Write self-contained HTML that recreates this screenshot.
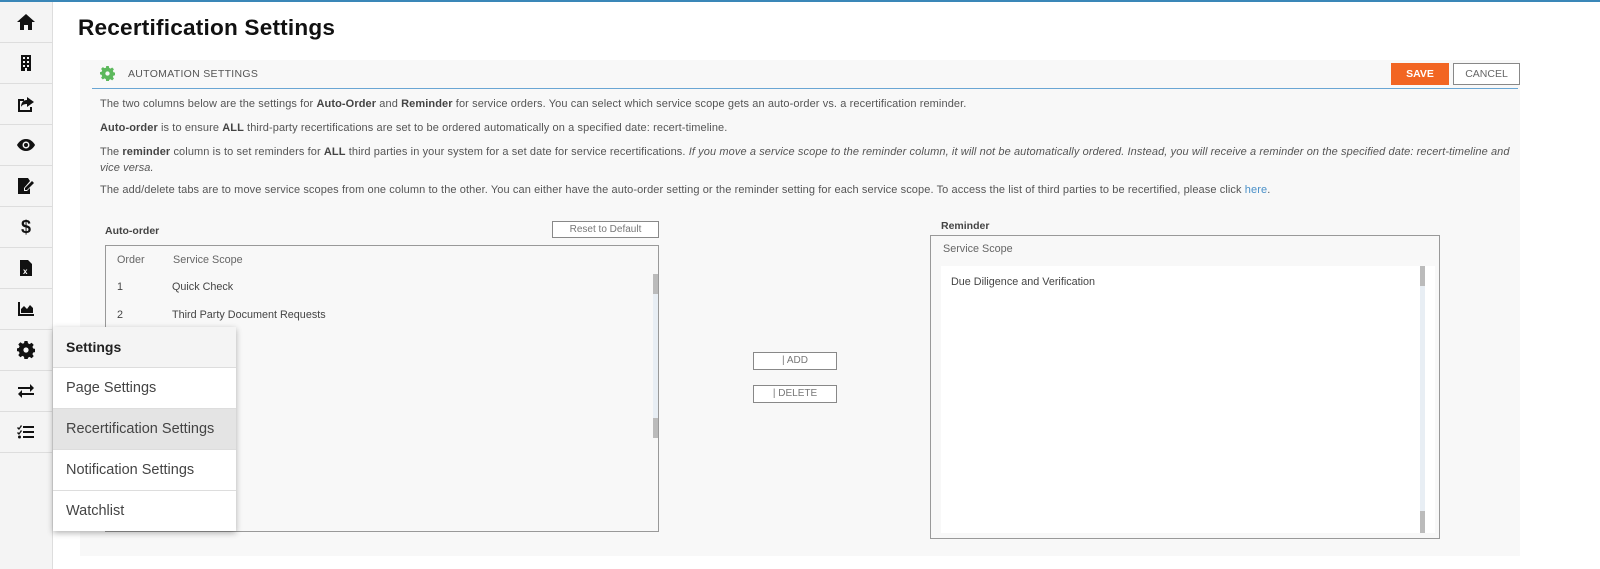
<!DOCTYPE html>
<html><head><style>
*{box-sizing:border-box;margin:0;padding:0}
body{width:1600px;height:569px;background:#fff;font-family:"Liberation Sans",sans-serif;position:relative;overflow:hidden;color:#555}
.topline{position:absolute;left:0;top:0;width:1600px;height:2px;background:#3a87b8}
.side{position:absolute;left:0;top:2px;width:53px;height:567px;background:#f4f4f4;border-right:1px solid #ddd}
.si{position:absolute;left:0;width:52px;height:41px;border-bottom:1px solid #ddd;display:flex;align-items:center;justify-content:center}
h1{position:absolute;left:78px;top:15px;font-size:22.6px;font-weight:bold;color:#111;letter-spacing:0.2px}
.panel{position:absolute;left:80px;top:60px;width:1440px;height:496px;background:#f8f8f8}
.hdr{position:absolute;left:12px;top:0;width:1426px;height:29px;border-bottom:1.5px solid #6aa6d4}
.hdr span{position:absolute;left:36px;top:8px;font-size:10.5px;color:#555;letter-spacing:.3px}
.save{position:absolute;left:1311px;top:3px;width:58px;height:22px;background:#f26522;color:#fff;font-weight:bold;font-size:10.5px;text-align:center;line-height:22px}
.cancel{position:absolute;left:1373px;top:3px;width:67px;height:22px;border:1px solid #888;background:#fff;color:#666;font-size:10.5px;text-align:center;line-height:20px}
.p{position:absolute;left:20px;font-size:11px;color:#555;white-space:nowrap;letter-spacing:.1px}
.p b{color:#444}
a{color:#4a90c8;text-decoration:none}
.lbl{position:absolute;font-size:10.5px;font-weight:bold;color:#444}
.box{position:absolute;border:1px solid #999;background:#f8f8f8}
.btn{position:absolute;border:1px solid #888;background:#fff;font-size:10px;color:#777;text-align:center}
.t{position:absolute;font-size:10.8px;color:#444}
.menu{position:absolute;left:53px;top:327px;width:183px;height:204px;background:#fff;box-shadow:0 2px 6px rgba(0,0,0,.3)}
.mi{height:41px;border-bottom:1px solid #ddd;padding-left:13px;line-height:40px;font-size:14.5px;color:#444}
</style></head><body>
<div class="topline"></div>
<div class="side">
<div class="si" style="top:0"><svg width="20" height="18" viewBox="0 0 20 18"><path d="M10 1L1 9h3v8h4v-5h4v5h4V9h3z" fill="#111"/></svg></div>
<div class="si" style="top:41px"><svg width="14" height="18" viewBox="0 0 14 18"><path d="M2 1h10v16H8v-3H6v3H2z" fill="#111"/><g fill="#f4f4f4"><rect x="4" y="3" width="2" height="2"/><rect x="8" y="3" width="2" height="2"/><rect x="4" y="7" width="2" height="2"/><rect x="8" y="7" width="2" height="2"/><rect x="4" y="11" width="2" height="2"/><rect x="8" y="11" width="2" height="2"/></g></svg></div>
<div class="si" style="top:82px"><svg width="20" height="18" viewBox="0 0 20 18"><path d="M2 4h6v2H4v9h10v-3h2v5H2z" fill="#111"/><path d="M11 2l7 5-7 5V9c-3 0-5 1-6 3 0-4 2-7 6-7z" fill="#111"/></svg></div>
<div class="si" style="top:123px"><svg width="20" height="14" viewBox="0 0 20 14"><path d="M10 1C5 1 2 5 1 7c1 2 4 6 9 6s8-4 9-6c-1-2-4-6-9-6z" fill="#111"/><circle cx="10" cy="7" r="3.5" fill="#f4f4f4"/><circle cx="10" cy="7" r="2" fill="#111"/></svg></div>
<div class="si" style="top:164px"><svg width="20" height="18" viewBox="0 0 20 18"><path d="M2 1h10l2 3-6 7v3h3l3-3v6H2z" fill="#111"/><path d="M16 4l2 2-7 7H9v-2z" fill="#111"/></svg></div>
<div class="si" style="top:205px;font-weight:bold;font-size:18px;color:#111">$</div>
<div class="si" style="top:246px"><svg width="14" height="18" viewBox="0 0 14 18"><path d="M1 1h8l4 4v12H1z" fill="#111"/><text x="4" y="15" font-size="8" fill="#fff" font-family="Liberation Sans" font-weight="bold">x</text></svg></div>
<div class="si" style="top:287px"><svg width="18" height="16" viewBox="0 0 18 16"><path d="M1 1h2v12h14v2H1z" fill="#111"/><path d="M4 12V8l3-3 3 3 3-4 3 3v5z" fill="#111"/></svg></div>
<div class="si" style="top:328px"><svg width="18" height="18" viewBox="0 0 18 18"><path d="M7.5 0h3l.5 2.3 1.6.8 2-1.3 2.1 2.1-1.3 2 .8 1.6 2.3.5v3l-2.3.5-.8 1.6 1.3 2-2.1 2.1-2-1.3-1.6.8-.5 2.3h-3L7 15.7l-1.6-.8-2 1.3-2.1-2.1 1.3-2-.8-1.6L-.5 10V7.5l2.3-.5.8-1.6-1.3-2 2.1-2.1 2 1.3L7 2.3z" fill="#111"/><circle cx="9" cy="9" r="2.6" fill="#f4f4f4"/></svg></div>
<div class="si" style="top:369px"><svg width="18" height="16" viewBox="0 0 18 16"><path d="M1 4h12V1l4 4-4 4V6H1z" fill="#111"/><path d="M17 10H5V7l-4 4 4 4v-3h12z" fill="#111"/></svg></div>
<div class="si" style="top:410px"><svg width="18" height="16" viewBox="0 0 18 16"><g fill="#111"><rect x="6" y="2" width="11" height="2"/><rect x="6" y="7" width="11" height="2"/><rect x="6" y="12" width="11" height="2"/><path d="M1 3l1 1 2-3 1 1-3 4-2-2z"/><path d="M1 8l1 1 2-3 1 1-3 4-2-2z"/><circle cx="2.5" cy="13" r="1.5"/></g></svg></div>
</div>
<h1>Recertification Settings</h1>
<div class="panel">
<div class="hdr"><svg style="position:absolute;left:8px;top:6px" width="15" height="15" viewBox="0 0 18 18"><path d="M7.5 0h3l.5 2.3 1.6.8 2-1.3 2.1 2.1-1.3 2 .8 1.6 2.3.5v3l-2.3.5-.8 1.6 1.3 2-2.1 2.1-2-1.3-1.6.8-.5 2.3h-3L7 15.7l-1.6-.8-2 1.3-2.1-2.1 1.3-2-.8-1.6L-.5 10V7.5l2.3-.5.8-1.6-1.3-2 2.1-2.1 2 1.3L7 2.3z" fill="#5cb85c"/><circle cx="9" cy="9" r="2.6" fill="#f8f8f8"/></svg><span>AUTOMATION SETTINGS</span></div>
<div class="save">SAVE</div><div class="cancel">CANCEL</div>
<div class="p" style="top:38px">The two columns below are the settings for <b>Auto-Order</b> and <b>Reminder</b> for service orders. You can select which service scope gets an auto-order vs. a recertification reminder.</div>
<div class="p" style="top:62px"><b>Auto-order</b> is to ensure <b>ALL</b> third-party recertifications are set to be ordered automatically on a specified date: recert-timeline.</div>
<div class="p" style="top:86px">The <b>reminder</b> column is to set reminders for <b>ALL</b> third parties in your system for a set date for service recertifications. <i>If you move a service scope to the reminder column, it will not be automatically ordered. Instead, you will receive a reminder on the specified date: recert-timeline and</i></div>
<div class="p" style="top:102px"><i>vice versa.</i></div>
<div class="p" style="top:124px">The add/delete tabs are to move service scopes from one column to the other. You can either have the auto-order setting or the reminder setting for each service scope. To access the list of third parties to be recertified, please click <a>here</a>.</div>
<div class="lbl" style="left:25px;top:165px">Auto-order</div>
<div class="btn" style="left:472px;top:161px;width:107px;height:17px;line-height:15px">Reset to Default</div>
<div class="box" style="left:25px;top:185px;width:554px;height:287px">
<div style="position:absolute;right:0;top:28px;width:5px;height:164px;background:#e8eef4"></div>
<div style="position:absolute;right:0;top:28px;width:5px;height:20px;background:#bbb"></div>
<div style="position:absolute;right:0;top:172px;width:5px;height:20px;background:#bbb"></div>
<div class="t" style="left:11px;top:8px;color:#666">Order</div><div class="t" style="left:67px;top:8px;color:#666">Service Scope</div>
<div class="t" style="left:11px;top:35px">1</div><div class="t" style="left:66px;top:35px">Quick Check</div>
<div class="t" style="left:11px;top:63px">2</div><div class="t" style="left:66px;top:63px">Third Party Document Requests</div>
<div class="t" style="left:66px;top:91px">Workflow</div>
</div>
<div class="btn" style="left:673px;top:292px;width:84px;height:18px;line-height:16px">| ADD</div>
<div class="btn" style="left:673px;top:325px;width:84px;height:18px;line-height:16px">| DELETE</div>
<div class="lbl" style="left:861px;top:160px">Reminder</div>
<div class="box" style="left:850px;top:175px;width:510px;height:304px">
<div class="t" style="left:12px;top:7px;color:#666">Service Scope</div>
<div style="position:absolute;left:10px;top:30px;width:494px;height:267px;background:#fff"></div>
<div style="position:absolute;left:489px;top:30px;width:5px;height:267px;background:#e8eef4"></div>
<div style="position:absolute;left:489px;top:30px;width:5px;height:20px;background:#bbb"></div>
<div style="position:absolute;left:489px;top:275px;width:5px;height:22px;background:#bbb"></div>
<div class="t" style="left:20px;top:40px">Due Diligence and Verification</div>
</div>
</div>
<div class="menu">
<div class="mi" style="background:#f4f4f4;font-weight:bold;color:#222;font-size:14px">Settings</div>
<div class="mi">Page Settings</div>
<div class="mi" style="background:#e4e4e4">Recertification Settings</div>
<div class="mi">Notification Settings</div>
<div class="mi" style="border:none">Watchlist</div>
</div>
</body></html>
